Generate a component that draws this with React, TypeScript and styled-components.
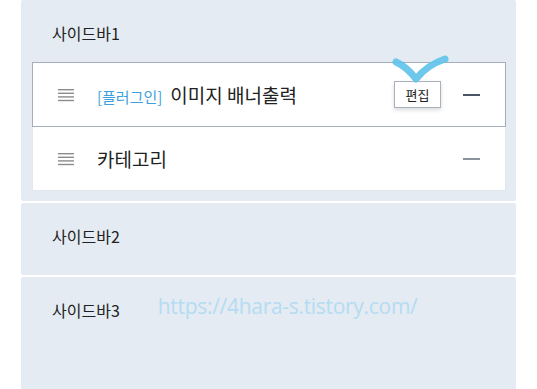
import styled, {createGlobalStyle} from "styled-components";

const GlobalStyle = createGlobalStyle`
  body {
    margin: 0;
    background: #fff;
    font-family: "Noto Sans CJK KR", "Noto Sans", sans-serif;
  }
`;

interface IWidget {
    id: number;
    plugin?: boolean;
    name: string;
}

interface ISidebar {
    title: string;
    widgets: IWidget[];
    tall?: boolean;
}

const sidebars: ISidebar[] = [
    {
        title: "사이드바1",
        widgets: [
            {id: 1, plugin: true, name: "이미지 배너출력"},
            {id: 2, name: "카테고리"},
        ],
    },
    {title: "사이드바2", widgets: []},
    {title: "사이드바3", widgets: [], tall: true},
];

const Handle = () => (
    <HandleIcon viewBox="0 0 16 14">
        <rect x="0" y="1" width="16" height="1.4" fill="#8c8c8c"/>
        <rect x="0" y="4.6" width="16" height="1.4" fill="#8c8c8c"/>
        <rect x="0" y="8.2" width="16" height="1.4" fill="#8c8c8c"/>
        <rect x="0" y="11.8" width="16" height="1.4" fill="#8c8c8c"/>
    </HandleIcon>
);

const App = () => {
    return (
        <>
            <GlobalStyle/>
            <Page>
                {sidebars.map((bar) => (
                    <Panel key={bar.title} $tall={bar.tall}>
                        <Title>
                            {bar.title}
                            {bar.tall && <Watermark>https://4hara-s.tistory.com/</Watermark>}
                        </Title>
                        {bar.widgets.length > 0 && (
                            <List>
                                {bar.widgets.map((w, i) => (
                                    <Row key={w.id} $active={i === 0}>
                                        <Handle/>
                                        <Name>
                                            {w.plugin && <Tag>[플러그인]</Tag>}
                                            {w.name}
                                        </Name>
                                        {i === 0 && (
                                            <EditWrap>
                                                <EditButton>편집</EditButton>
                                                <Check viewBox="0 0 60 32">
                                                    <path d="M6 8 Q17 13 26 25 Q37 11 55 5" fill="none"
                                                          stroke="#62c3ea" strokeWidth="7" strokeLinecap="round"
                                                          strokeLinejoin="round" opacity="0.92"/>
                                                </Check>
                                            </EditWrap>
                                        )}
                                        <Minus $active={i === 0}/>
                                    </Row>
                                ))}
                            </List>
                        )}
                    </Panel>
                ))}
            </Page>
        </>
    );
};

const Page = styled.div`
  width: 495px;
  margin-left: 21px;
  display: flex;
  flex-direction: column;
  gap: 2px;
`;

const Panel = styled.div<{ $tall?: boolean }>`
  background: #e5ebf2;
  border-radius: 2px;
  padding: 0 10px 10px 11px;
  min-height: ${({$tall}) => ($tall ? "112px" : "auto")};
`;

const Title = styled.div`
  display: flex;
  align-items: center;
  height: 22px;
  padding: 22px 0 18px 20px;
  font-size: 16px;
  color: #222;
`;

const Watermark = styled.span`
  margin-left: 38px;
  margin-top: -8px;
  font-family: "Open Sans", "Noto Sans", sans-serif;
  font-size: 21px;
  color: #b4dcf2;
  letter-spacing: -0.3px;
`;

const List = styled.div`
  display: flex;
  flex-direction: column;
`;

const Row = styled.div<{ $active?: boolean }>`
  display: flex;
  align-items: center;
  height: 63px;
  padding: 0 25px;
  background: #fff;
  border: 1px solid ${({$active}) => ($active ? "#a4aebc" : "#e2e7ed")};
  border-top-width: ${({$active}) => ($active ? "1px" : "0")};
`;

const HandleIcon = styled.svg`
  width: 16px;
  height: 14px;
  flex-shrink: 0;
`;

const Name = styled.div`
  flex: 1;
  margin-left: 23px;
  font-size: 19px;
  color: #222;
`;

const Tag = styled.span`
  color: #3d9fdc;
  font-size: 15px;
  margin-right: 8px;
`;

const EditWrap = styled.div`
  position: relative;
  margin-right: 22px;
`;

const EditButton = styled.button`
  width: 47px;
  height: 27px;
  padding: 0;
  background: #fff;
  border: 1px solid #a9b1bc;
  box-shadow: 0 2px 4px rgba(0, 0, 0, 0.15);
  font-family: "Noto Sans CJK KR", sans-serif;
  font-size: 13px;
  color: #222;
`;

const Check = styled.svg`
  position: absolute;
  left: -4px;
  top: -27px;
  width: 60px;
  height: 32px;
  pointer-events: none;
`;

const Minus = styled.span<{ $active?: boolean }>`
  display: block;
  width: 17px;
  height: 2px;
  background: ${({$active}) => ($active ? "#4c5564" : "#8b939e")};
`;

export default App;
